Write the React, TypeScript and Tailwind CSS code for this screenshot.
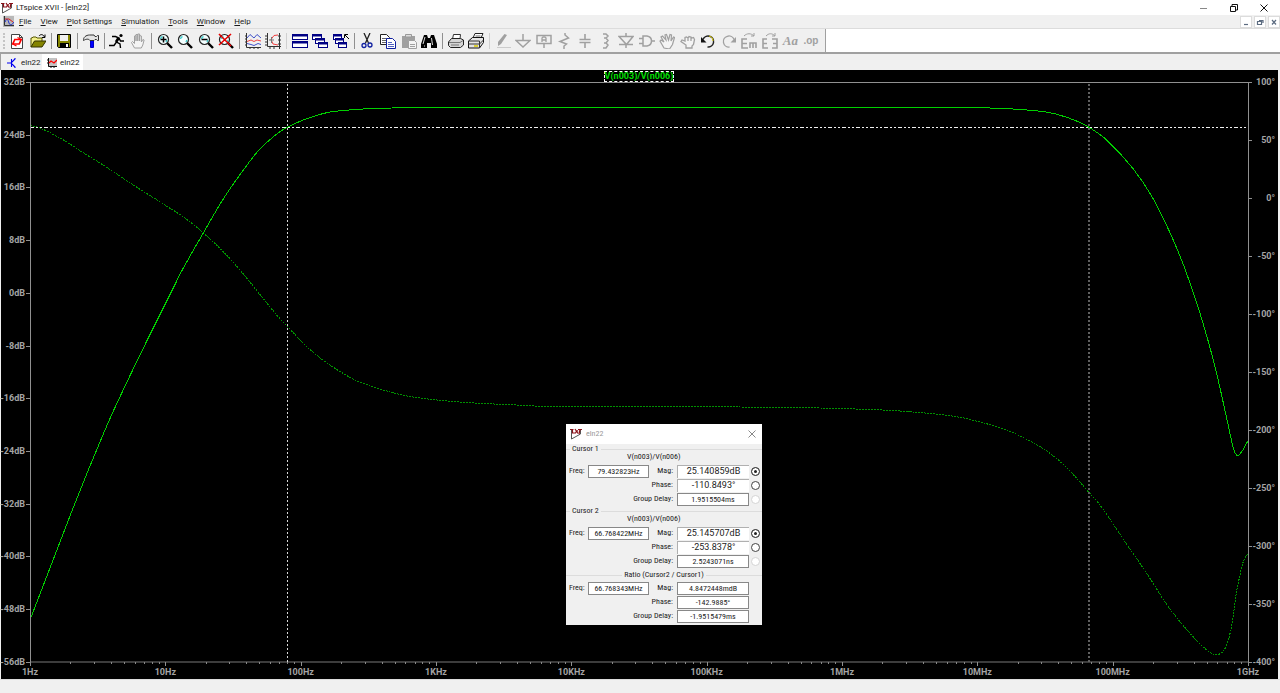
import React, { useState } from "react";

type Point = [number, number];

const magnitude: Point[] = [
  [30, 620], [50, 568], [70, 516], [90, 466], [112, 414], [144.7, 345.3], [173.3, 288], [181.7, 271],
  [203.3, 233], [224.7, 196.7], [250, 161], [260.7, 148.3], [276.7, 134], [287.3, 127.3], [303.3, 120],
  [326.7, 112.7], [345, 110.3], [365, 108.9], [392, 108], [420, 107.5], [800, 107.5], [984, 107.9], [1020, 109.5],
  [1050, 112.7], [1075, 120.3], [1089, 127.3], [1106.7, 140], [1133.3, 169], [1152, 196.7], [1170, 232.7],
  [1185, 269], [1200, 313.3], [1215, 366.7], [1228.7, 427.3], [1233.3, 448.3], [1237.3, 455.5],
  [1241.7, 451.7], [1248, 440.7],
];

const phase: Point[] = [
  [30, 125.5], [40, 128], [61.7, 139], [81.7, 151.7], [106.7, 167.3], [133.3, 185], [163.3, 204],
  [186.7, 219.3], [203.3, 233], [221.7, 250], [240, 270], [261.7, 296.7], [276.7, 315], [287.3, 326.3],
  [306.7, 346.7], [330, 365], [356.7, 380.7], [386.7, 391], [410, 396.5], [440, 400.3], [474, 403],
  [517, 405], [545, 406.4], [640, 406.4], [740, 407], [820, 408], [870, 409.5], [900, 411], [940, 414.5],
  [960, 417.3], [980, 422], [1006.7, 430], [1030, 441], [1050, 453.3], [1067.3, 468.3], [1088.3, 491.7],
  [1101.7, 507.3], [1126.7, 544.3], [1146.7, 573.3], [1168.3, 606.7], [1190, 633.3], [1206.7, 650],
  [1216, 654.7], [1223.3, 651], [1228.3, 640], [1232.7, 620], [1235.7, 596.7], [1240, 575],
  [1243.3, 561.7], [1248, 553.3],
];

/** Smooth path through the sample points (Catmull-Rom turned into Bezier segments). */
function smooth(p: Point[]): string {
  let d = `M${p[0][0]} ${p[0][1]}`;
  for (let i = 0; i < p.length - 1; i++) {
    const a = p[Math.max(i - 1, 0)];
    const b = p[i];
    const c = p[i + 1];
    const e = p[Math.min(i + 2, p.length - 1)];
    const w = (c[0] - b[0]) / 3;
    const s1 = (c[1] - a[1]) / (c[0] - a[0]);
    const s2 = (e[1] - b[1]) / (e[0] - b[0]);
    d += `C${b[0] + w} ${b[1] + s1 * w} ${c[0] - w} ${c[1] - s2 * w} ${c[0]} ${c[1]}`;
  }
  return d;
}

const gainLabels = ["32dB", "24dB", "16dB", "8dB", "0dB", "-8dB", "-16dB", "-24dB", "-32dB", "-40dB", "-48dB", "-56dB"];
const phaseLabels = ["100°", "50°", "0°", "-50°", "-100°", "-150°", "-200°", "-250°", "-300°", "-350°", "-400°"];
const freqLabels = ["1Hz", "10Hz", "100Hz", "1KHz", "10KHz", "100KHz", "1MHz", "10MHz", "100MHz", "1GHz"];

const G = "#a0a0a0";

function Magnifier({ children }: { children?: React.ReactNode }) {
  return (
    <>
      <path d="M10 10l5 5" stroke="#000" strokeWidth="2.4" />
      <circle cx="6.5" cy="6.5" r="5" fill="#f4ffff" stroke="#222" strokeWidth="1.2" />
      <path d="M3.5 6a3 3 0 0 1 2-2.5M9 9l1-2" stroke="#40d0d0" fill="none" strokeWidth="1.4" />
      {children}
    </>
  );
}

const windowPane = (x: number, y: number, w: number, h: number) => (
  <g key={`${x}-${y}`}>
    <rect x={x} y={y} width={w} height={h} fill="#fff" stroke="#000084" />
    <rect x={x} y={y} width={w} height="1.5" fill="#000084" stroke="#000084" />
  </g>
);

const icons: Record<string, React.ReactNode> = {
  "New schematic": (
    <>
      <path d="M2.5 1.5h8l3 3v11h-11z" fill="#fff" stroke="#444" />
      <path d="M10.5 1.5v3h3" fill="none" stroke="#444" />
      <path d="M5.8 6.5h6.4l-2 4.5H3.8z" fill="none" stroke="#f00" strokeWidth="1.7" />
      <path d="M8.5 4.5l3.7 2M7.5 13l-3.7-2" stroke="#f00" strokeWidth="1.3" />
    </>
  ),
  Open: (
    <>
      <path d="M1 14V5h1l1-1h3l1 1h5v3" fill="#f3f08c" stroke="#555500" />
      <path d="M1 14l3.5-6H16l-4 6z" fill="#848400" stroke="#333300" />
      <path d="M9 3c1.5-2 4-2 5.5 1M15 1.5v3h-3" fill="none" stroke="#000" />
    </>
  ),
  Save: (
    <>
      <path d="M1.5 1.5h13v13h-12l-1-1z" fill="#848400" stroke="#000" />
      <rect x="4" y="2" width="8" height="6" fill="#f0f0f0" />
      <rect x="4" y="10" width="9" height="5" fill="#000" />
      <rect x="10" y="11" width="2" height="3" fill="#fff" />
    </>
  ),
  "Control Panel": (
    <>
      <path d="M7.5 7h3v7.5h-3z" fill="#00f" stroke="#0000c0" />
      <path d="M.5 7.5c-.5-3 2.500-5.500 6-5.500h4.500l1 1.500h1.500l1-1h1v5h-1l-1-1H12l-1 1H7C5.500 5.500 3 6 .5 7.500z" fill="#e4e4e4" stroke="#333" />
    </>
  ),
  Run: (
    <>
      <circle cx="12" cy="2.5" r="1.6" fill="#000" />
      <path d="M3 3.5h3.5L10 5 7.5 9l3.5 2 .5 4M7.5 9L5 12.5H0M10 5l1.500 3H15" fill="none" stroke="#000" strokeWidth="1.4" />
      <path d="M9.5 5L7 9" stroke="#000" strokeWidth="2.6" />
    </>
  ),
  Halt: (
    <path d="M4.5 15L1.5 9.5l1-1 2 2V3l1.5-.5V8 1.5h1.8V8 1h1.8v7V2.5l1.8.5v6l1.5-2.5 1.2.5-1.3 5-1.5 3z" fill="#f4f4f4" stroke={G} />
  ),
  "Zoom in": (
    <Magnifier>
      <path d="M6.5 3.5v6M3.5 6.5h6" stroke="#000" strokeWidth="1.5" />
    </Magnifier>
  ),
  "Zoom area": <Magnifier />,
  "Zoom back": (
    <Magnifier>
      <path d="M3.5 6.5h6" stroke="#000" strokeWidth="1.5" />
    </Magnifier>
  ),
  "Zoom full extents": (
    <Magnifier>
      <path d="M1 1l12 12M13 1L1 12" stroke="#e80000" strokeWidth="1.6" />
    </Magnifier>
  ),
  Autorange: (
    <>
      <path d="M1.5 0v14.5H16M0 3h2M0 6h2M0 9h2M0 12h2M5 14v2M9 14v2M13 14v2" fill="none" stroke="#333" />
      <path d="M2 5l3-3.5L9 5l3-3.5L16 5M2 10.5l4 1 3 1 4-2 3 1" fill="none" stroke="#4050c8" />
      <path d="M2 8.5l4-1.5 3 1.5 3-1.5 4 1" fill="none" stroke="#f04040" />
    </>
  ),
  "Pick visible traces": (
    <>
      <path d="M2.5 0v13.5H16M0 3h2M0 6h2M0 9h2M0 12h2M14.5 0v16M13 3h3M13 7h3M13 11h3M5 14v2M9 14v2" fill="none" stroke="#333" />
      <path d="M13 2L9 2.5 6 6.5l2 4.5 5 1" fill="none" stroke="#f04040" />
      <path d="M6.5 4v6M4 7h5" stroke="#777" />
    </>
  ),
  "Tile windows": <>{windowPane(0.5, 1.5, 15, 5)}{windowPane(0.5, 8.5, 15, 6)}</>,
  "Cascade windows": <>{windowPane(0.5, 1.5, 9, 5)}{windowPane(3.5, 5.5, 9, 5)}{windowPane(6.5, 9.5, 9, 5)}</>,
  "Close all windows": (
    <>
      {windowPane(0.5, 1.5, 8, 5)}{windowPane(2.5, 5.5, 8, 5)}{windowPane(5.5, 9.5, 8, 5)}
      <path d="M11.5 5V1.5H15M12 2l4 4" stroke="#000" fill="none" />
    </>
  ),
  Cut: (
    <>
      <path d="M5 0l4.5 10M11 0L6.5 10" stroke="#222" strokeWidth="1.3" />
      <circle cx="5" cy="12.5" r="2" fill="none" stroke="#1020a0" strokeWidth="1.3" />
      <circle cx="11" cy="12" r="2" fill="none" stroke="#1020a0" strokeWidth="1.3" />
    </>
  ),
  Copy: (
    <>
      <path d="M.5 1.5h6l3 3v7h-9z" fill="#fff" stroke="#222" />
      <path d="M2 5.5h5M2 7.5h5M2 9.5h5" stroke="#666" />
      <path d="M6.5 5.5h6l3 3v7h-9z" fill="#fff" stroke="#1020a0" />
      <path d="M8 9.5h4M8 11.5h6M8 13.5h6" stroke="#5060c0" />
    </>
  ),
  Paste: (
    <>
      <path d="M1 3h13v12H1z" fill={G} />
      <path d="M4.5 4V1.5h6V4z" fill="#ddd" stroke="#999" />
      <path d="M7.5 7.5h6l2 2v6h-8z" fill="#f4f4f4" stroke={G} />
      <path d="M9 11.5h5M9 13.5h5" stroke={G} />
    </>
  ),
  Find: (
    <>
      <path d="M3 2h3l1 3h2l1-3h3l3 9v4h-6v-5H6v5H0v-4z" fill="#000" />
      <path d="M4 4l-2 7M10.5 5l1 7M3 13h1" stroke="#ddd" />
    </>
  ),
  Print: (
    <>
      <path d="M4.5 6l1-4.5h7L12 6" fill="#fff" stroke="#333" />
      <path d="M.5 9l3-3.5h9l3 1.5v5l-3 2.5H2.5l-2-2z" fill="#d4d4d4" stroke="#222" />
      <path d="M1 9.5h11l3-2M3 12h8" fill="none" stroke="#777" />
    </>
  ),
  "Print setup": (
    <>
      <path d="M5 5l2-4.5h8L13 5" fill="#fff" stroke="#222" />
      <path d="M7.5 3h5" stroke="#666" />
      <path d="M.5 8l4-3.5h11v5l-4 5.5H.5z" fill="#e4e4e4" stroke="#111" />
      <path d="M.5 8h11v7M.5 11h11l4-4" fill="none" stroke="#333" />
      <path d="M6 13h4" stroke="#d8c800" strokeWidth="1.5" />
    </>
  ),
  "Draw wire": (
    <>
      <path d="M9.5 1L3 9v4l3-2 6-9z" fill={G} />
      <path d="M2 14.5h14" stroke="#ccc" />
    </>
  ),
  Ground: <path d="M8 1v6M1 7.5h14l-7 6.5z" fill="none" stroke={G} strokeWidth="1.5" />,
  "Label net": (
    <>
      <path d="M1 2.5h14v8H1zM8 10v5" fill="none" stroke={G} strokeWidth="1.5" />
      <path d="M6 9V5l1-1h2l1 1v4M6 7h4" fill="none" stroke={G} strokeWidth="1.3" />
    </>
  ),
  Resistor: <path d="M9 0v2l3.5 3L4 8.5l6.5 2.5L8 13v3" fill="none" stroke={G} strokeWidth="1.5" />,
  Capacitor: <path d="M8 1v5.5M8 9.5V15M2.5 6.5h11M2.5 9.5h11" stroke={G} strokeWidth="1.6" />,
  Inductor: <path d="M6 1h3l2 2-2 2H7h2l2 2.5L9 10H7h2l2 2-2 3H6" fill="none" stroke={G} strokeWidth="1.5" />,
  Diode: <path d="M8 0v3M1 3.5h14l-6.5 8zM1 11.5h14M8 11v4" fill="none" stroke={G} strokeWidth="1.5" />,
  Component: <path d="M4 3h4c6 1 6 9 0 10H4zM0 5.5h4M0 10.5h4M12 8h4" fill="none" stroke={G} strokeWidth="1.5" />,
  Move: <path d="M5 15L1 8l1-1 3 2-3-5 1.5-1L7 7 6 2l1.5-.5L9.5 7 11 1.5l1.5.5-.5 6 2.5-4 1 .5-2 7-3 4.500z" fill="#f4f4f4" stroke={G} strokeWidth="1.2" />,
  Drag: <path d="M6 15v-3L1 8.5l1-1.5 3 1V4.5L6.5 4 8 5l1-1.5 2 .5 1 1 1.5-.5 1 2-1 5-1.5 1.5v2z M8 5v3M11 4.5V8" fill="#f4f4f4" stroke={G} strokeWidth="1.3" />,
  Undo: (
    <>
      <path d="M3 6.5a5.5 5.5 0 1 1 4.5 7.5" fill="none" stroke="#222" strokeWidth="1.5" />
      <path d="M1 4v5.5h5.5z" fill="#111" />
      <path d="M9 3a5 5 0 0 1 4 5" fill="none" stroke="#d8c800" />
    </>
  ),
  Redo: (
    <>
      <path d="M13 6.5A5.5 5.5 0 1 0 8.5 14" fill="none" stroke={G} strokeWidth="1.3" />
      <path d="M15 4v5.5H9.5z" fill={G} />
    </>
  ),
  Rotate: (
    <>
      <path d="M6 6H1v9h6M1 10.5h5M9 15v-5h6v5M12 10v5" fill="none" stroke={G} strokeWidth="1.6" />
      <path d="M3 3c3-3 7-3 10 0M13 0v3h-3" fill="none" stroke={G} />
    </>
  ),
  Mirror: (
    <>
      <path d="M5 6H1v9h5M1 10.5h4M10 6h5v9h-5M15 10.5h-4" fill="none" stroke={G} strokeWidth="1.6" />
      <path d="M4 3c3-3 6-3 9 0M13 0v3h-3" fill="none" stroke={G} />
    </>
  ),
};

const toolGroups: string[][] = [
  ["New schematic", "Open"],
  ["Save"],
  ["Control Panel"],
  ["Run", "Halt"],
  ["Zoom in", "Zoom area", "Zoom back", "Zoom full extents"],
  ["Autorange", "Pick visible traces"],
  ["Tile windows", "Cascade windows", "Close all windows"],
  ["Cut", "Copy", "Paste", "Find"],
  ["Print", "Print setup"],
  ["Draw wire", "Ground", "Label net", "Resistor", "Capacitor", "Inductor", "Diode", "Component", "Move", "Drag",
    "Undo", "Redo", "Rotate", "Mirror", "Text", "SPICE directive"],
];

function ToolIcon({ name }: { name: string }) {
  if (name === "Text") return <span className="font-['Liberation_Serif',serif] text-[13px] font-bold italic leading-4 text-[#a0a0a0]">Aa</span>;
  if (name === "SPICE directive") return <span className="font-['Liberation_Sans',sans-serif] text-[10px] font-bold leading-4 text-[#a0a0a0]">.op</span>;
  return <svg viewBox="0 0 16 16" className="size-4 shrink-0" aria-hidden="true">{icons[name]}</svg>;
}

function Logo({ className }: { className: string }) {
  return (
    <svg viewBox="0 0 12 12" className={className} aria-hidden="true">
      <path d="M1.5 1.5V11L10.5 6V1" fill="#fff" stroke="#555" />
      <path d="M0 1.5h3.5M2.5 1.5V5H6M5 1l3 4.500M5.500 4.500L8 2.500M8 1.500h4M10 1.500L9 6" stroke="#8b1018" strokeWidth="1.2" fill="none" />
    </svg>
  );
}

function Plot() {
  const minorTicks: number[] = [];
  for (let decade = 0; decade < 9; decade++)
    for (let n = 2; n < 10; n++) minorTicks.push(30 + (decade + Math.log10(n)) * (1218 / 9));
  return (
    <div className="ml-px mr-0.5 grid min-h-0 flex-1 grid-cols-[29px_1fr_30px] grid-rows-[12px_minmax(0,1fr)_17px] bg-black font-['Roboto',sans-serif] text-[9px] font-bold text-[#a4a4a4]">
      <div className="col-start-2 flex items-center justify-center">
        <button className="border border-dashed border-white leading-[9px] text-[#00e000]">V(n003)/V(n006)</button>
      </div>
      <div className="col-start-1 row-start-2 -mb-px flex flex-col justify-between">
        {gainLabels.map((t) => (
          <div key={t} className="flex h-px items-center justify-end gap-px leading-none">
            <span className="whitespace-nowrap">{t}</span>
            <span className="h-px w-1 shrink-0 bg-[#909090]" />
          </div>
        ))}
      </div>
      <svg viewBox="30 82 1218 580" preserveAspectRatio="none" className="row-start-2 size-full overflow-visible" fill="none" shapeRendering="crispEdges" role="img" aria-label="Gain and phase of V(n003)/V(n006)">
        <path d="M30 82.5H1248" stroke="#909090" />
        <path d="M30 662H1248" stroke="#3c3c3c" strokeWidth="2" />
        <path d={smooth(phase)} stroke="#009000" strokeDasharray="2 1" />
        <path d={smooth(magnitude)} stroke="#00d000" />
        <path d="M30 127.5H1246" stroke="#f0f0f0" strokeDasharray="4 2 2 2 2 2" />
        <path d="M287.5 84V662" stroke="#d8d8d8" strokeDasharray="2 2" />
        <path d="M1089 84V662" stroke="#606060" strokeWidth="2" strokeDasharray="2 2" />
        {minorTicks.map((x) => (
          <path key={x} d={`M${x} 662v2`} stroke="#888" />
        ))}
        {freqLabels.map((t, i) => (
          <path key={t} d={`M${30.5 + (i * 1218) / 9} 662v4`} stroke="#909090" />
        ))}
        <path d="M30.5 82V666M1248.5 82V666" stroke="#909090" />
      </svg>
      <div className="col-start-3 row-start-2 -mb-px flex flex-col justify-between pr-[3px]">
        {phaseLabels.map((t) => (
          <div key={t} className="flex h-px items-center justify-between leading-none">
            <span className="h-px w-1 shrink-0 bg-[#909090]" />
            <span className="whitespace-nowrap">{t}</span>
          </div>
        ))}
      </div>
      <div className="col-start-2 row-start-3 flex justify-between pt-1.5 leading-[9px]">
        {freqLabels.map((t) => (
          <div key={t} className="flex w-0 justify-center whitespace-nowrap">{t}</div>
        ))}
      </div>
    </div>
  );
}

interface Readout {
  id: string;
  title: string;
  trace?: string;
  freq: string;
  rows: [string, string][];
}

const readouts: Readout[] = [
  { id: "c1", title: "Cursor 1", trace: "V(n003)/V(n006)", freq: "79.432823Hz", rows: [["Mag:", "25.140859dB"], ["Phase:", "-110.8493°"], ["Group Delay:", "1.9515504ms"]] },
  { id: "c2", title: "Cursor 2", trace: "V(n003)/V(n006)", freq: "66.768422MHz", rows: [["Mag:", "25.145707dB"], ["Phase:", "-253.8378°"], ["Group Delay:", "2.5243071ns"]] },
  { id: "ratio", title: "Ratio (Cursor2 / Cursor1)", freq: "66.768343MHz", rows: [["Mag:", "4.8472448mdB"], ["Phase:", "-142.9885°"], ["Group Delay:", "-1.9515479ms"]] },
];

function ReadoutGroup({ data }: { data: Readout }) {
  const [mode, setMode] = useState(0);
  const cursor = data.trace !== undefined;
  return (
    <section aria-label={data.title} className={cursor ? "pb-px" : ""}>
      <div className={cursor ? "flex h-2 items-center gap-0.5" : "flex h-3 items-center gap-0.5"}>
        <span className={cursor ? "h-px w-1 bg-[#dcdcdc]" : "h-px flex-1 bg-[#dcdcdc]"} />
        <h3 className="leading-2">{data.title}</h3>
        <span className="h-px flex-1 bg-[#dcdcdc]" />
      </div>
      {cursor && <p className="h-[11px] pl-[61px] leading-2">{data.trace}</p>}
      {data.rows.map(([label, value], i) => {
        const large = cursor && i < 2;
        return (
          <div key={label} className="flex h-3.5 items-center pl-[3px]">
            {i === 0 && (
              <>
                <label htmlFor={`${data.id}-freq`} className="w-[19px]">Freq:</label>
                <input id={`${data.id}-freq`} readOnly value={data.freq} className="h-[13px] w-[61px] border border-[#888] bg-white text-center" />
              </>
            )}
            <label htmlFor={`${data.id}-${i}`} className="flex-1 pr-1 text-right">{label}</label>
            <input
              id={`${data.id}-${i}`}
              readOnly
              value={value}
              className={
                large
                  ? "h-[13px] w-[72px] border-l border-t border-[#b0b0b0] bg-white text-center font-['Roboto',sans-serif] text-[9px]"
                  : "h-[13px] w-[72px] border border-[#888] bg-white text-center"
              }
            />
            <span className="flex w-[13px] justify-center">
              {cursor && (
                <input
                  type="radio"
                  name={`${data.id}-mode`}
                  aria-label={`Attach to ${label}`}
                  checked={mode === i}
                  disabled={i === 2}
                  onChange={() => setMode(i)}
                  className="size-[9px] appearance-none rounded-full border border-[#444] bg-white checked:bg-[#222] checked:shadow-[inset_0_0_0_2px_white] disabled:border-[#d4d4d4]"
                />
              )}
            </span>
          </div>
        );
      })}
    </section>
  );
}

function CursorDialog() {
  return (
    <div role="dialog" aria-label="eln22" className="absolute left-[566px] top-[424px] w-[196px] bg-[#f0f0f0] pb-0.5 font-['Roboto_Condensed','Roboto',sans-serif] text-[8px] text-[#222]">
      <header className="mb-px flex h-5 items-center bg-white pl-1 pr-1.5">
        <Logo className="size-3" />
        <h2 className="flex-1 pl-1 text-[#999]">eln22</h2>
        <button aria-label="Close" className="flex">
          <svg viewBox="0 0 8 8" className="size-2"><path d="M.5.5l7 7M7.5.5l-7 7" stroke="#888" /></svg>
        </button>
      </header>
      {readouts.map((r) => <ReadoutGroup key={r.id} data={r} />)}
    </div>
  );
}

const menus = ["File", "View", "Plot Settings", "Simulation", "Tools", "Window", "Help"];
const mdiButtons: [string, string][] = [
  ["Minimize document", "M2 6.5h4"],
  ["Restore document", "M1.5 3.5h4v3h-4zM3 2.5h4V5"],
  ["Close document", "M2 2l4 4.5M6 2L2 6.5"],
];

export default function App() {
  return (
    <div className="relative flex h-screen flex-col overflow-hidden bg-[#f0f0f0] font-['Roboto',sans-serif] text-[8px] text-[#1a1a1a]">
      <header className="flex h-[15px] shrink-0 items-center bg-white pl-px pr-3">
        <Logo className="size-3" />
        <h1 className="flex-1 pl-[3px] pt-px">LTspice XVII - [eln22]</h1>
        <div className="flex items-center gap-[22px]">
          <button aria-label="Minimize"><svg viewBox="0 0 8 8" className="size-2"><path d="M0 4.5h7" stroke="#888" /></svg></button>
          <button aria-label="Restore"><svg viewBox="0 0 8 8" className="size-2"><path d="M.5 2.5h5v5h-5zM2 2V.5h5.5V6H6" fill="none" stroke="#111" /></svg></button>
          <button aria-label="Close"><svg viewBox="0 0 8 8" className="size-2"><path d="M.5.5l7 7M7.5.5l-7 7" stroke="#111" /></svg></button>
        </div>
      </header>

      <nav className="flex h-[13px] shrink-0 items-center gap-[9px] pl-[3px]">
        <svg viewBox="0 0 11 11" className="-mr-1 size-[11px]" aria-hidden="true">
          <path d="M0 0h11v11H0z" fill="#b8b8b8" />
          <path d="M1.5 0v9.5H11" stroke="#333" fill="none" />
          <path d="M2 6c2-5 3-2 4 1s3 2 5-1" stroke="#2030d0" fill="none" />
          <path d="M2 3h4l4 3" stroke="#d02020" fill="none" />
        </svg>
        {menus.map((m) => (
          <button key={m} className="pt-px"><span className="underline">{m[0]}</span>{m.slice(1)}</button>
        ))}
        <div className="ml-auto flex gap-0.5">
          {mdiButtons.map(([name, d]) => (
            <button key={name} aria-label={name} className="border border-[#dcdcdc] bg-white p-px">
              <svg viewBox="0 0 8 8" className="size-2"><path d={d} fill="none" stroke="#5b6b80" strokeWidth="1.2" /></svg>
            </button>
          ))}
        </div>
      </nav>

      <div className="flex h-[26px] shrink-0 border-b-2 border-t border-b-[#a0a0a0] border-t-[#dcdcdc] bg-white">
        <div role="toolbar" aria-label="Main toolbar" className="flex w-[826px] shrink-0 items-center border-r border-[#a0a0a0] bg-[#f0f0f0] pl-[3px] pr-1">
          <span className="mr-0.5 h-4 w-0.5 border-l-2 border-dotted border-[#c4c4c4]" />
          {toolGroups.map((group, gi) => (
            <React.Fragment key={group[0]}>
              {gi > 0 && <span className="flex w-1.5 shrink-0 justify-center"><i className={gi === 6 || gi === 9 ? "h-4 w-px bg-[#d0d0d0]" : "h-4 w-px bg-[#909090]"} /></span>}
              {group.map((name) => (
                <button key={name} aria-label={name} title={name} className="flex min-w-0 flex-1 basis-0 items-center justify-center">
                  <ToolIcon name={name} />
                </button>
              ))}
            </React.Fragment>
          ))}
        </div>
      </div>

      <div role="tablist" className="flex h-4 shrink-0 items-stretch border-l border-[#a0a0a0] pl-1.5">
        <button role="tab" aria-selected="false" className="flex w-[35px] items-center gap-1 pt-px">
          <svg viewBox="0 0 10 10" className="size-[10px]" aria-hidden="true"><path d="M0 5h4M4.500 1v8M5 4l3-3v-1M5 6l3 3v1" stroke="#0000f0" strokeWidth="1.1" fill="none" /></svg>
          eln22
        </button>
        <button role="tab" aria-selected="true" className="flex w-[41px] items-center gap-[3px] bg-white pl-[5px] pt-px">
          <svg viewBox="0 0 10 10" className="size-[10px]" aria-hidden="true">
            <path d="M1 0h9v9H1z" fill="#c4c4c4" />
            <path d="M1.5 0v8.5H10M0 2h1M0 5h1M4 9v1M7 9v1" stroke="#111" fill="none" />
            <path d="M2 5l2-2 3 2 3-3" stroke="#f00" strokeWidth="1.3" fill="none" />
          </svg>
          eln22
        </button>
      </div>

      <Plot />

      <footer className="h-3.5 shrink-0 border-t border-[#dcdcdc] bg-[#f0f0f0]" />
      <CursorDialog />
    </div>
  );
}
